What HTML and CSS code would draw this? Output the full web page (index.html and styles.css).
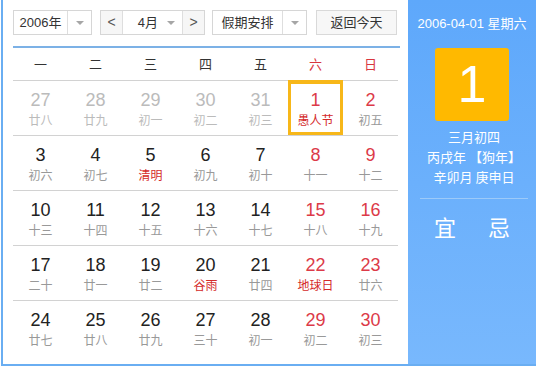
FILE: index.html
```html
<!DOCTYPE html>
<html lang="zh-CN">
<head>
    <meta charset="UTF-8">
    <title>万年历</title>
    <link rel="stylesheet" href="styles.css">
</head>
<body>
    <div class="calendar">
        <div class="main">
            <div class="toolbar">
                <div class="select year-select">
                    <span class="select-text">2006年</span>
                    <span class="select-arrow"></span>
                </div>
                <div class="month-box">
                    <span class="nav-btn">&lt;</span>
                    <span class="select-text">4月</span>
                    <span class="select-arrow plain"></span>
                    <span class="nav-btn">&gt;</span>
                </div>
                <div class="select holiday-select">
                    <span class="select-text">假期安排</span>
                    <span class="select-arrow"></span>
                </div>
                <div class="today-btn">返回今天</div>
            </div>

            <div class="week-head">
                <span>一</span><span>二</span><span>三</span><span>四</span><span>五</span>
                <span class="red">六</span><span class="red">日</span>
            </div>

            <div class="days" id="days"></div>
        </div>

        <div class="side">
            <div class="side-date">2006-04-01 星期六</div>
            <div class="big-day">1</div>
            <div class="lunar-info">
                <p>三月初四</p>
                <p>丙戌年 【狗年】</p>
                <p>辛卯月 庚申日</p>
            </div>
            <div class="yi-ji">
                <span>宜</span>
                <span>忌</span>
            </div>
        </div>
    </div>

    <script>
        // day, lunar text, flags: o = other month, w = weekend, f = festival, s = selected
        const cells = [
            [27, '廿八', 'o'], [28, '廿九', 'o'], [29, '初一', 'o'], [30, '初二', 'o'], [31, '初三', 'o'], [1, '愚人节', 'wfs'], [2, '初五', 'w'],
            [3, '初六', ''], [4, '初七', ''], [5, '清明', 'f'], [6, '初九', ''], [7, '初十', ''], [8, '十一', 'w'], [9, '十二', 'w'],
            [10, '十三', ''], [11, '十四', ''], [12, '十五', ''], [13, '十六', ''], [14, '十七', ''], [15, '十八', 'w'], [16, '十九', 'w'],
            [17, '二十', ''], [18, '廿一', ''], [19, '廿二', ''], [20, '谷雨', 'f'], [21, '廿四', ''], [22, '地球日', 'wf'], [23, '廿六', 'w'],
            [24, '廿七', ''], [25, '廿八', ''], [26, '廿九', ''], [27, '三十', ''], [28, '初一', ''], [29, '初二', 'w'], [30, '初三', 'w']
        ];

        const days = document.getElementById('days');
        cells.forEach(function(c) {
            const cell = document.createElement('div');
            cell.className = 'day';
            if (c[2].includes('o')) cell.classList.add('other');
            if (c[2].includes('w')) cell.classList.add('weekend');
            if (c[2].includes('f')) cell.classList.add('festival');
            if (c[2].includes('s')) cell.classList.add('selected');

            const num = document.createElement('span');
            num.className = 'num';
            num.textContent = c[0];
            const lunar = document.createElement('span');
            lunar.className = 'lunar';
            lunar.textContent = c[1];

            cell.appendChild(num);
            cell.appendChild(lunar);
            days.appendChild(cell);
        });
    </script>
</body>
</html>
```

FILE: styles.css
```css
* {
    margin: 0;
    padding: 0;
    box-sizing: border-box;
}

body {
    font-family: "Liberation Sans", Arial, "Noto Sans CJK SC", sans-serif;
    background: #fff;
    color: #333;
}

.calendar {
    display: flex;
    width: 535px;
    height: 366px;
    margin-left: 1px;
    border-left: 2px solid #6aaef2;
    border-bottom: 2px solid #6aaef2;
}

.main {
    width: 405px;
    padding: 10px 8px 0 10px;
}

/* toolbar */
.toolbar {
    display: flex;
    height: 25px;
    font-size: 13px;
    color: #333;
}

.select,
.month-box {
    display: flex;
    align-items: center;
    border: 1px solid #d6d6d6;
    background: #fff;
}

.select-text {
    flex: 1;
    text-align: center;
    line-height: 23px;
}

.select-arrow {
    position: relative;
    width: 24px;
    height: 23px;
    border-left: 1px solid #dedede;
}

.select-arrow::after {
    content: "";
    position: absolute;
    left: 8px;
    top: 10px;
    border-left: 4px solid transparent;
    border-right: 4px solid transparent;
    border-top: 4px solid #a6a6a6;
}

.select-arrow.plain {
    border-left: 0;
    width: 20px;
}

.select-arrow.plain::after {
    left: 5px;
}

.year-select {
    width: 79px;
}

.month-box {
    width: 105px;
    margin-left: 8px;
}

.nav-btn {
    width: 22px;
    height: 23px;
    line-height: 22px;
    text-align: center;
    background: #f6f6f6;
    color: #555;
    font-size: 14px;
}

.nav-btn:first-child {
    border-right: 1px solid #dedede;
}

.nav-btn:last-child {
    border-left: 1px solid #dedede;
}

.month-box .select-text {
    text-align: right;
    padding-right: 4px;
}

.holiday-select {
    width: 95px;
    margin-left: 7px;
}

.today-btn {
    width: 81px;
    margin-left: 9px;
    border: 1px solid #d9d9d9;
    background: #f7f7f7;
    line-height: 23px;
    text-align: center;
}

/* week header */
.week-head {
    display: grid;
    grid-template-columns: repeat(7, 55px);
    margin-top: 11px;
    height: 34px;
    border-top: 2px solid #7cb1e6;
    font-family: "Noto Sans CJK SC", sans-serif;
    font-size: 13px;
    color: #333;
}

.week-head span {
    text-align: center;
    line-height: 31px;
}

.week-head .red {
    color: #d9363e;
}

/* day grid */
.days {
    display: grid;
    grid-template-columns: repeat(7, 55px);
    grid-auto-rows: 55px;
}

.day {
    display: flex;
    flex-direction: column;
    align-items: center;
    padding-top: 8px;
    border-top: 1px solid #d2d2d2;
}

.num {
    font-size: 18px;
    line-height: 22px;
    color: #222;
}

.lunar {
    font-family: "Noto Sans CJK SC", sans-serif;
    font-size: 12px;
    line-height: 17px;
    color: #999;
}

.day.other .num {
    color: #bbb;
}

.day.other .lunar {
    color: #bbb;
}

.day.weekend .num {
    color: #dc3a48;
}

.day.festival .lunar {
    color: #d42a2a;
}

.day.selected {
    border-top-color: #f7b719;
    box-shadow: inset 0 0 0 3px #f7b719;
}

/* side panel */
.side {
    flex: 1;
    background: linear-gradient(#5ea8fb, #78b8fd);
    color: #fff;
    text-align: center;
    padding-top: 15px;
}

.side-date {
    font-size: 13px;
    line-height: 18px;
}

.big-day {
    width: 74px;
    height: 73px;
    margin: 15px auto 0;
    background: #ffb900;
    border-radius: 3px;
    font-size: 52px;
    line-height: 73px;
}

.lunar-info {
    margin-top: 6px;
    padding-bottom: 11px;
    margin-left: 12px;
    margin-right: 8px;
    border-bottom: 1px solid #9ccaf9;
    font-family: "Noto Sans CJK SC", sans-serif;
    font-size: 13px;
    line-height: 20px;
}

.yi-ji {
    display: flex;
    justify-content: center;
    gap: 32px;
    margin-top: 12px;
    font-family: "Noto Sans CJK SC", sans-serif;
    font-size: 22px;
    line-height: 30px;
}
```
